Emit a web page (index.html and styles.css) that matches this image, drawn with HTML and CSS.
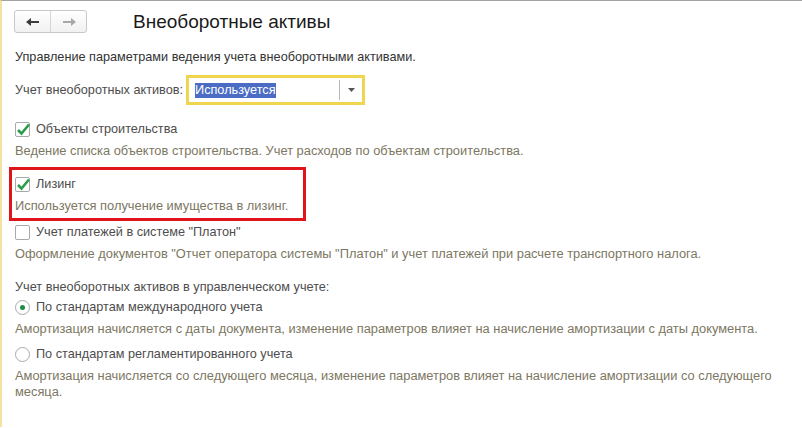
FILE: index.html
```html
<!DOCTYPE html>
<html lang="ru">
<head>
  <meta charset="UTF-8">
  <title>Внеоборотные активы</title>
  <link rel="stylesheet" href="styles.css">
</head>
<body>
  <div class="window">
    <!-- Header -->
    <div class="header">
      <div class="nav-buttons">
        <div class="nav-btn">
          <svg width="16" height="10" viewBox="0 0 16 10"><path d="M1 5 L6 1 L6 4 L14 4 L14 6 L6 6 L6 9 Z" fill="#3c3c3c"/></svg>
        </div>
        <div class="nav-btn">
          <svg width="16" height="10" viewBox="0 0 16 10"><path d="M15 5 L10 1 L10 4 L2 4 L2 6 L10 6 L10 9 Z" fill="#a8a8a8"/></svg>
        </div>
      </div>
      <div class="title">Внеоборотные активы</div>
    </div>

    <!-- Content -->
    <div class="content">
      <p class="intro">Управление параметрами ведения учета внеоборотными активами.</p>

      <div class="field-row">
        <span class="field-label">Учет внеоборотных активов:</span>
        <div class="combo">
          <span class="combo-value"><span class="selected">Используется</span></span>
          <span class="combo-btn">
            <svg width="7" height="4" viewBox="0 0 7 4"><path d="M0 0 L7 0 L3.5 4 Z" fill="#555"/></svg>
          </span>
        </div>
      </div>

      <div class="option first">
        <label class="check-row">
          <span class="checkbox checked">
            <svg width="15" height="13" viewBox="0 0 15 13"><path d="M2 7 L5.5 10.5 L13 1.5" fill="none" stroke="#2a9d4b" stroke-width="2.6"/></svg>
          </span>
          Объекты строительства
        </label>
        <div class="hint">Ведение списка объектов строительства. Учет расходов по объектам строительства.</div>
      </div>

      <div class="option highlighted">
        <label class="check-row">
          <span class="checkbox checked">
            <svg width="15" height="13" viewBox="0 0 15 13"><path d="M2 7 L5.5 10.5 L13 1.5" fill="none" stroke="#2a9d4b" stroke-width="2.6"/></svg>
          </span>
          Лизинг
        </label>
        <div class="hint">Используется получение имущества в лизинг.</div>
      </div>

      <div class="option after-highlight">
        <label class="check-row">
          <span class="checkbox"></span>
          Учет платежей в системе "Платон"
        </label>
        <div class="hint">Оформление документов "Отчет оператора системы "Платон" и учет платежей при расчете транспортного налога.</div>
      </div>

      <div class="group">
        <div class="group-label">Учет внеоборотных активов в управленческом учете:</div>
        <div class="option">
          <label class="check-row">
            <span class="radio checked"></span>
            По стандартам международного учета
          </label>
          <div class="hint">Амортизация начисляется с даты документа, изменение параметров влияет на начисление амортизации с даты документа.</div>
        </div>
        <div class="option">
          <label class="check-row">
            <span class="radio"></span>
            По стандартам регламентированного учета
          </label>
          <div class="hint">Амортизация начисляется со следующего месяца, изменение параметров влияет на начисление амортизации со следующего месяца.</div>
        </div>
      </div>
    </div>
  </div>
</body>
</html>
```

FILE: styles.css
```css
/* Basic Styles */
body {
  font-family: "Liberation Sans", Arial, sans-serif;
  font-size: 12.7px;
  color: #4d4d4d;
  margin: 0;
  padding: 0;
  background: #fff;
}

.window {
  border-top: 1px solid #a3a3a3;
  border-left: 2px solid #f3e2a2;
  height: 427px;
  box-sizing: border-box;
}

/* Header */
.header {
  display: flex;
  align-items: center;
  padding: 9px 12px 0;
  height: 23px;
}

.nav-buttons {
  display: flex;
  width: 73px;
  height: 23px;
  border: 1px solid #c8c8c8;
  border-radius: 3px;
  box-sizing: border-box;
  background: linear-gradient(#ffffff, #f1f1f1);
}

.nav-btn {
  flex: 1;
  display: flex;
  align-items: center;
  justify-content: center;
}

.nav-btn + .nav-btn {
  border-left: 1px solid #d6d6d6;
}

.title {
  margin-left: 46px;
  font-size: 19px;
  color: #1a1a1a;
}

/* Content */
.content {
  padding: 0 13px;
}

.intro {
  margin: 16px 0 0;
  line-height: 16px;
  color: #333;
}

.field-row {
  display: flex;
  align-items: center;
  margin-top: 10px;
}

.field-label {
  margin-right: 3px;
}

.combo {
  display: flex;
  width: 179px;
  height: 30px;
  border: 3px solid #f0d64f;
  box-sizing: border-box;
  background: #fff;
}

.combo-value {
  flex: 1;
  display: flex;
  align-items: center;
  padding-left: 6px;
  border-right: 1px solid #b8b8b8;
  margin: 2px 0;
}

.selected {
  background: #4a6cc4;
  color: #fff;
  line-height: 15px;
}

.combo-btn {
  width: 22px;
  display: flex;
  align-items: center;
  justify-content: center;
}

/* Options */
.option {
  margin-top: 7px;
}

.option.first {
  margin-top: 14px;
}

.check-row {
  display: flex;
  align-items: center;
  gap: 6px;
  height: 20px;
}

.checkbox {
  width: 15px;
  height: 15px;
  border: 1px solid #a9a9a9;
  border-radius: 2px;
  box-sizing: border-box;
  background: #fff;
  position: relative;
}

.checkbox svg {
  position: absolute;
  left: 0;
  top: 0;
}

.radio {
  width: 15px;
  height: 15px;
  border: 1px solid #a9a9a9;
  border-radius: 50%;
  box-sizing: border-box;
  display: flex;
  align-items: center;
  justify-content: center;
}

.radio.checked::after {
  content: "";
  width: 5px;
  height: 5px;
  border-radius: 50%;
  background: #1e8c44;
}

.hint {
  color: #7c7762;
  margin-top: 4px;
  line-height: 16px;
  font-size: 12.85px;
}

.highlighted {
  border: 3px solid #e0141b;
  margin-left: -6px;
  margin-top: 8px;
  padding: 4px 9px 4px 3px;
  width: 279px;
}

.option.after-highlight {
  margin-top: 1px;
}

.group {
  margin-top: 17px;
}

.group-label {
  line-height: 16px;
}

.group .option:nth-child(2) {
  margin-top: 2px;
}
```
